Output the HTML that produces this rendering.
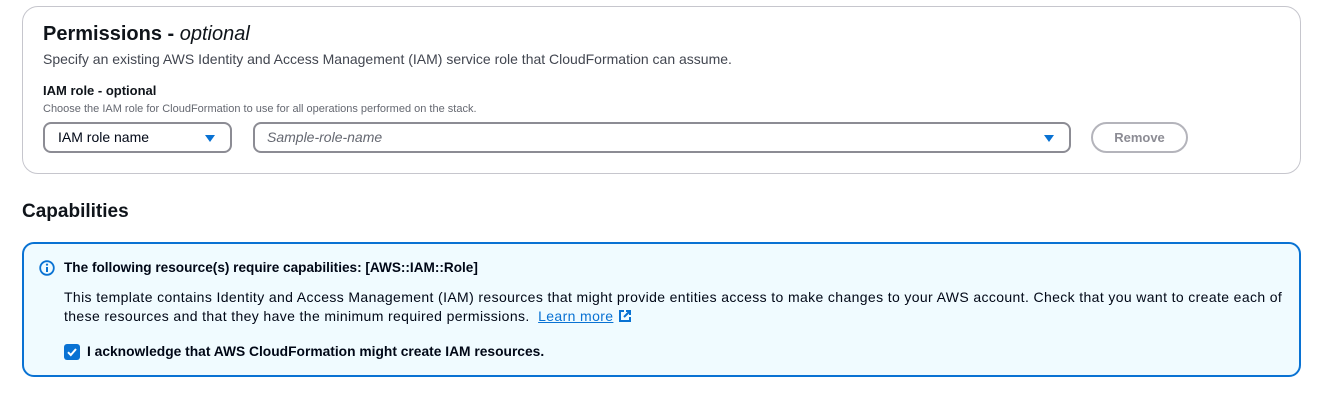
<!DOCTYPE html>
<html><head><style>
body{margin:0;width:1323px;height:408px;background:#fff;font-family:"Liberation Sans",sans-serif;color:#000716;position:relative;overflow:hidden}
.a{position:absolute;white-space:nowrap}
.card{position:absolute;left:22px;top:6px;width:1277px;height:166px;border:1px solid #c6c6cd;border-radius:16px}
.sel{position:absolute;top:122px;height:27px;border:2px solid #8c8c94;border-radius:8px;font-size:14px;line-height:27px}
.tri{position:absolute;top:11px;width:0;height:0;border-left:5px solid transparent;border-right:5px solid transparent;border-top:7px solid #0972d3}
.info{position:absolute;left:22px;top:242px;width:1275px;height:131px;border:2px solid #0972d3;border-radius:12px;background:#f0fbff}
</style></head><body>
<div class="card"></div>
<div class="a" style="left:43px;top:23px;font-size:20px;font-weight:bold;color:#0f141a">Permissions - <i style="font-weight:normal">optional</i></div>
<div class="a" style="left:43px;top:51px;font-size:14px;color:#424650">Specify an existing AWS Identity and Access Management (IAM) service role that CloudFormation can assume.</div>
<div class="a" style="left:43px;top:83px;font-size:13px;font-weight:bold;color:#0f141a">IAM role - optional</div>
<div class="a" style="left:43px;top:103px;font-size:11px;color:#656871">Choose the IAM role for CloudFormation to use for all operations performed on the stack.</div>
<div class="sel" style="left:43px;width:185px"><span style="position:absolute;left:13px">IAM role name</span><div class="tri" style="left:160px"></div></div>
<div class="sel" style="left:253px;width:814px"><span style="position:absolute;left:12px;font-style:italic;color:#656871">Sample-role-name</span><div class="tri" style="left:789px"></div></div>
<div class="a" style="left:1091px;top:122px;width:93px;height:27px;border:2px solid #b4b4bb;border-radius:16px;font-size:13px;font-weight:bold;color:#8c8c94;text-align:center;line-height:27px">Remove</div>
<div class="a" style="left:22px;top:201px;font-size:19px;font-weight:bold;color:#0f141a">Capabilities</div>
<div class="info"></div>
<svg class="a" style="left:39px;top:260px" width="16" height="16" viewBox="0 0 16 16"><circle cx="8" cy="8" r="6.8" fill="none" stroke="#0972d3" stroke-width="1.8"/><line x1="8" y1="7" x2="8" y2="12" stroke="#0972d3" stroke-width="2"/><circle cx="8" cy="4.6" r="1.1" fill="#0972d3"/></svg>
<div class="a" style="left:64px;top:260px;font-size:13.6px;font-weight:bold">The following resource(s) require capabilities: [AWS::IAM::Role]</div>
<div class="a" style="left:64px;top:288px;font-size:14px;letter-spacing:0.37px;line-height:19px;color:#000716">This template contains Identity and Access Management (IAM) resources that might provide entities access to make changes to your AWS account. Check that you want to create each of<br>these resources and that they have the minimum required permissions. &nbsp;<span style="color:#0972d3;text-decoration:underline">Learn more</span> <svg width="14" height="14" viewBox="0 0 14 14" style="vertical-align:-2px"><path d="M6 2H2v10h10V8M8 2h4v4M12 2L6 8" fill="none" stroke="#0972d3" stroke-width="2"/></svg></div>
<div class="a" style="left:64px;top:344px;width:16px;height:16px;background:#0972d3;border-radius:3px"><svg width="16" height="16" viewBox="0 0 16 16"><path d="M4 8.2l2.8 2.8L12 5" fill="none" stroke="#fff" stroke-width="2"/></svg></div>
<div class="a" style="left:87px;top:344px;font-size:13.8px;font-weight:bold">I acknowledge that AWS CloudFormation might create IAM resources.</div>
</body></html>
